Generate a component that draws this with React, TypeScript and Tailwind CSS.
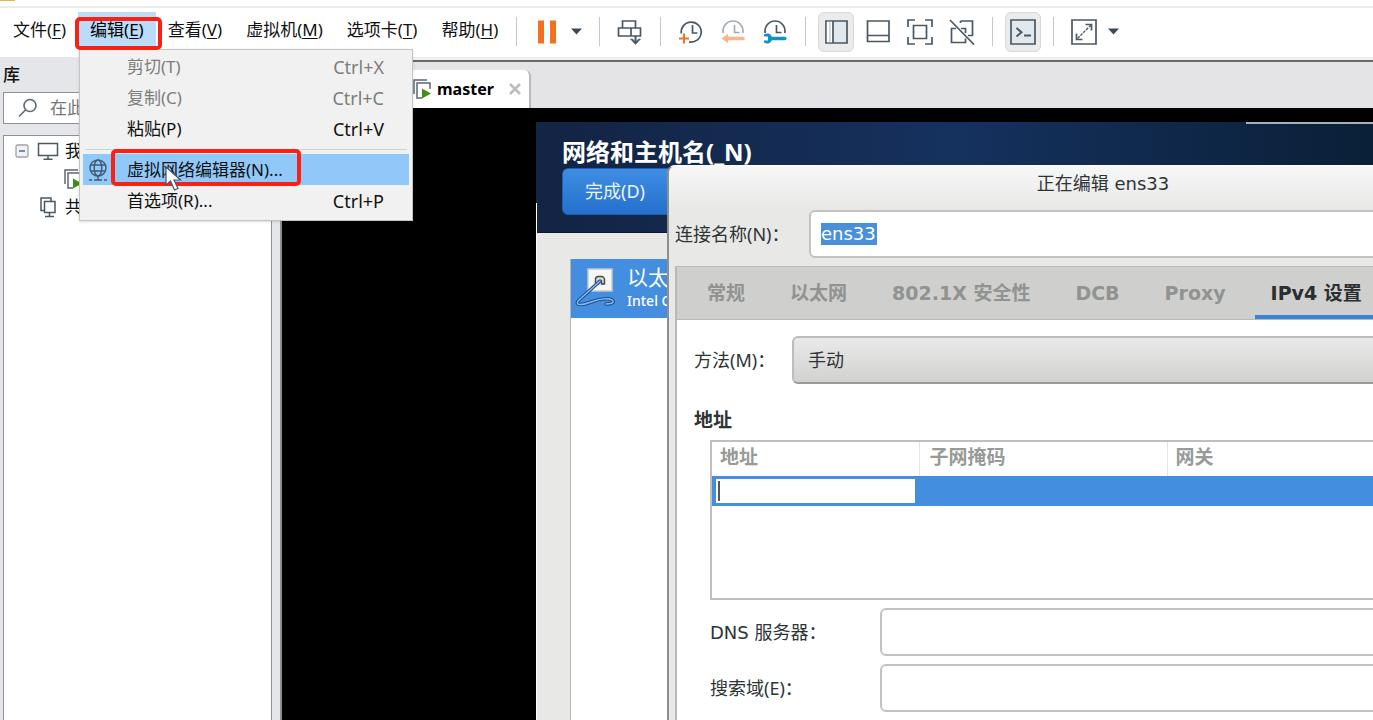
import type { ReactNode } from "react";

const menus = [
  { label: "文件", key: "F" },
  { label: "编辑", key: "E", open: true },
  { label: "查看", key: "V" },
  { label: "虚拟机", key: "M" },
  { label: "选项卡", key: "T" },
  { label: "帮助", key: "H" },
];

function Separator() {
  return <span className="mx-3 h-[29px] w-px shrink-0 bg-[#c6c6c8]" />;
}

function ToolButton({ label, active, children }: { label: string; active?: boolean; children: ReactNode }) {
  return (
    <button
      type="button"
      aria-label={label}
      className={
        active
          ? "flex h-10 w-9 shrink-0 items-center justify-center rounded-md border border-[#d8d8d8] bg-[#ebebec]"
          : "flex h-10 w-9 shrink-0 items-center justify-center"
      }
    >
      {children}
    </button>
  );
}

function Icon({ children, size = 26 }: { children: ReactNode; size?: number }) {
  return (
    <svg width={size} height={size} viewBox="0 0 26 26" fill="none" stroke="#4a5863" strokeWidth="1.7" className="shrink-0">
      {children}
    </svg>
  );
}

function Caret({ label }: { label: string }) {
  return (
    <button type="button" aria-label={label} className="flex h-10 w-[22px] shrink-0 items-center justify-center">
      <svg width="11" height="7" viewBox="0 0 11 7">
        <path d="M0 0.5h11L5.500 6.500z" fill="#3c4a56" />
      </svg>
    </button>
  );
}

function VmIcon() {
  return (
    <svg width="20" height="22" viewBox="0 0 20 22" fill="none" className="shrink-0">
      <path d="M2 16V2h13" stroke="#5b6670" strokeWidth="1.500" />
      <path d="M10 20H5V5h13v6" stroke="#5b6670" strokeWidth="1.500" />
      <path d="M10 10.500l9 5-9 5z" fill="#3f9014" />
    </svg>
  );
}

function Toolbar() {
  return (
    <header className="flex h-[51px] shrink-0 items-center border-t-2 border-[#ececec] bg-white pb-0.5 pl-px">
      <nav className="flex self-start pt-1">
        {menus.map((m) => (
          <button
            key={m.key}
            type="button"
            className={
              m.open
                ? "h-9 shrink-0 whitespace-nowrap bg-[#b9dcf9] px-3 text-[17px] leading-6 text-black"
                : "h-9 shrink-0 whitespace-nowrap px-3 text-[17px] leading-6 text-[#111]"
            }
          >
            {m.label}(<u className="underline-offset-2">{m.key}</u>)
          </button>
        ))}
      </nav>
      <span className="ml-1.5 mr-3 h-[29px] w-px shrink-0 bg-[#c6c6c8]" />
      <ToolButton label="挂起">
        <Icon>
          <path d="M4 1.500h6v23H4zM16 1.500h6v23h-6z" fill="#f4701f" stroke="none" />
        </Icon>
      </ToolButton>
      <Caret label="电源选项" />
      <Separator />
      <ToolButton label="发送">
        <Icon>
          <path d="M5.500 9V2h13v7M1.500 9h22v8h-22zM14 9v8" />
          <path d="M18.500 17v6" strokeWidth="2" />
          <path d="M13.500 20h2l3 3 3-3h2l-5 5.500z" fill="#4a5863" stroke="#4a5863" strokeWidth="0.600" />
        </Icon>
      </ToolButton>
      <Separator />
      <div className="flex gap-1.5">
        <ToolButton label="拍摄快照">
          <Icon>
            <path d="M3.300 14.500A10 10 0 1 1 11 22.800M14.500 6v8h5" />
            <path d="M6 14.500v10M1 19.500h10" stroke="#f4701f" strokeWidth="2" />
          </Icon>
        </ToolButton>
        <ToolButton label="恢复快照">
          <Icon>
            <path d="M3.200 14A10 10 0 1 1 22.800 14M14.500 6v7.500h5" stroke="#a4abb2" />
            <path d="M1.500 19.500l6.500-4.800v3h16.500v3.600H8v3z" fill="#fdb48b" stroke="none" />
          </Icon>
        </ToolButton>
        <ToolButton label="管理快照">
          <Icon>
            <path d="M3.200 14A10 10 0 1 1 22.800 14M14.500 6v7.500h5" />
            <path
              d="M2 15.500a5 5 0 0 1 7.800 2.200h13a1.800 1.800 0 0 1 0 3.600h-13A5 5 0 0 1 2 23.500v-2h4v-4H2z"
              fill="#0e94c4"
              stroke="none"
            />
          </Icon>
        </ToolButton>
      </div>
      <Separator />
      <div className="flex gap-1.5">
        <ToolButton label="显示库" active>
          <Icon>
            <path d="M3 2h21v22H3z" fill="#e1e8ee" />
            <path d="M3.800 2.800h5.500v20.400H3.800z" fill="#fff" stroke="none" />
            <path d="M10 2v22" />
            <path d="M7 3v20" stroke="#a9b3bb" strokeWidth="1" />
          </Icon>
        </ToolButton>
        <ToolButton label="缩略图栏">
          <Icon>
            <path d="M2.500 2h21.500v20.500H2.500zM2.500 16.500H24" />
          </Icon>
        </ToolButton>
        <ToolButton label="全屏">
          <Icon>
            <path d="M1 8V1h7M18 1h7v7M25 18v7h-7M8 25H1v-7M6.500 6.500h13v13h-13z" />
          </Icon>
        </ToolButton>
        <ToolButton label="Unity 模式">
          <Icon>
            <path d="M11.500 2H23.500v14.500h-4.500M7 9.500H2.500v14H16.500v-4M12 9.500h4.500V14M11.500 2v2" />
            <path d="M1 1l24 24.500" />
          </Icon>
        </ToolButton>
      </div>
      <Separator />
      <ToolButton label="控制台视图" active>
        <Icon>
          <path d="M1 1h24v24H1z" fill="#e1e8ee" />
          <path d="M6.500 9l5 4.300-5 4.300M14 16.500h7" strokeWidth="2" />
        </Icon>
      </ToolButton>
      <Separator />
      <ToolButton label="拉伸客户机">
        <Icon>
          <path d="M1 1h24v24H1z" />
          <path d="M14.500 5.500h6v6M5.500 14.500v6h6" />
          <path d="M20 6L6 20" strokeWidth="1.300" strokeDasharray="3 1" />
        </Icon>
      </ToolButton>
      <Caret label="拉伸选项" />
    </header>
  );
}

function Library() {
  return (
    <aside className="flex w-[282px] shrink-0 flex-col border-r-2 border-[#8f9194] bg-[#e4e6e9] pl-[3px] pr-2">
      <h2 className="h-[35px] pt-[6px] text-[17px] leading-6 font-medium text-[#111]">库</h2>
      <label className="flex h-8 shrink-0 items-center border border-[#8d9196] bg-white pl-3.5">
        <svg width="20" height="20" viewBox="0 0 20 20" fill="none" stroke="#5d6871" strokeWidth="1.600" className="shrink-0">
          <circle cx="12" cy="7.500" r="6" />
          <path d="M7.700 11.800L1 18.500" />
        </svg>
        <input
          type="text"
          aria-label="搜索"
          placeholder="在此"
          className="ml-3 w-full min-w-0 text-[17px] leading-6 outline-none placeholder:text-[#767676]"
        />
      </label>
      <ul className="mt-[11px] flex-1 border border-b-0 border-[#8d9196] bg-white pt-px text-[17px] leading-7 text-[#111]">
        <li className="flex items-center pl-[11px]">
          <svg width="14" height="14" viewBox="0 0 14 14" fill="none" className="shrink-0">
            <rect x="1" y="1" width="12" height="12" rx="1.500" fill="#f2f2f2" stroke="#a2a2a2" strokeWidth="1.300" />
            <path d="M4 7h6" stroke="#3560a8" strokeWidth="1.400" />
          </svg>
          <svg width="22" height="20" viewBox="0 0 22 20" fill="none" stroke="#4a5863" strokeWidth="1.500" className="ml-2 shrink-0">
            <path d="M1.500 2.500h19v12h-19zM11 14.500V18M6.500 18.200h9" />
          </svg>
          <span className="ml-1.5">我</span>
        </li>
        <li className="flex h-7 items-center pl-[59px]">
          <VmIcon />
        </li>
        <li className="flex items-center pl-[35px]">
          <svg width="20" height="22" viewBox="0 0 20 22" fill="none" stroke="#4a5863" strokeWidth="1.500" className="shrink-0">
            <path d="M5 14.500H2V2h10v3M5.500 5.500H16v11H5.500zM10.500 16.500V20M6 20.500h9" />
          </svg>
          <span className="ml-[6px]">共</span>
        </li>
      </ul>
    </aside>
  );
}

function MenuRow({ label, shortcut, disabled }: { label: string; shortcut?: string; disabled?: boolean }) {
  return (
    <button
      type="button"
      role="menuitem"
      disabled={disabled}
      className="flex h-[31px] w-full items-center pl-11 pr-[25px] text-[17px] leading-6 text-[#111] disabled:text-[#7d7d7d]"
    >
      <span>{label}</span>
      {shortcut && <span className="ml-auto text-[18px]">{shortcut}</span>}
    </button>
  );
}

function EditMenu() {
  return (
    <div
      role="menu"
      className="absolute left-[79px] top-[49px] z-20 w-[334px] border border-[#c4c4c4] bg-[#f1f1f1] px-[3px] pb-1 pt-px shadow-sm"
    >
      <MenuRow label="剪切(T)" shortcut="Ctrl+X" disabled />
      <MenuRow label="复制(C)" shortcut="Ctrl+C" disabled />
      <MenuRow label="粘贴(P)" shortcut="Ctrl+V" />
      <hr className="mx-0.5 mb-1 mt-[5px] border-[#d2d2d2]" />
      <button
        type="button"
        role="menuitem"
        className="flex h-[31px] w-full items-center bg-[#90c8fa] pl-1 text-[17px] leading-6 text-[#111]"
      >
        <svg width="22" height="24" viewBox="0 0 22 24" fill="none" stroke="#3f5a75" strokeWidth="1.400" className="shrink-0">
          <circle cx="11" cy="10" r="8" />
          <ellipse cx="11" cy="10" rx="3.800" ry="8" />
          <path d="M3.500 7h15M3.500 13h15M11 18v4M2 22h3M7 22h8M17 22h3" />
        </svg>
        <span className="ml-[18px]">虚拟网络编辑器(N)...</span>
      </button>
      <MenuRow label="首选项(R)..." shortcut="Ctrl+P" />
    </div>
  );
}

const tabs = ["常规", "以太网", "802.1X 安全性", "DCB", "Proxy"];

function ConnectionDialog() {
  return (
    <section
      aria-label="正在编辑 ens33"
      className="absolute left-[131px] top-[43px] flex h-[640px] w-[870px] flex-col rounded-tl-lg border-l-2 border-t border-[#8f908e] border-t-white bg-[#e8e8e7] pl-[6px] font-['DejaVu_Sans','Noto_Sans_CJK_SC',sans-serif] text-[18px] text-[#2e3436]"
    >
      <h2 className="-ml-[6px] h-11 shrink-0 rounded-tl-lg bg-gradient-to-b from-[#f7f7f7] to-[#e8e8e7] pt-1 text-center leading-7">
        正在编辑 ens33
      </h2>
      <div className="flex h-12 shrink-0 items-center">
        <label htmlFor="conn" className="w-[134px] shrink-0 font-['Noto_Sans','Noto_Sans_CJK_SC',sans-serif]">
          连接名称(N)：
        </label>
        <div className="flex h-12 flex-1 items-center rounded-l-md border-2 border-[#c2c2c0] bg-white pl-2.5">
          <input
            id="conn"
            type="text"
            defaultValue="ens33"
            size={4}
            className="h-[22px] w-[56px] bg-[#4a90d9] leading-[22px] text-white outline-none"
          />
        </div>
      </div>
      <div className="mt-2 flex flex-1 flex-col border-l-2 border-t border-[#b9b9b7] bg-white">
        <div
          role="tablist"
          className="flex h-[53px] shrink-0 gap-[13px] border-b border-[#b9b9b7] bg-[#cfcfcd] pl-[14px] text-[19px] font-bold text-[#919391]"
        >
          {tabs.map((t) => (
            <button key={t} type="button" role="tab" className="shrink-0 whitespace-nowrap px-4">
              {t}
            </button>
          ))}
          <button
            type="button"
            role="tab"
            aria-selected="true"
            className="shrink-0 whitespace-nowrap border-b-4 border-[#3584da] px-4 pt-1 text-[#2a2e30]"
          >
            IPv4 设置
          </button>
        </div>
        <div className="flex flex-col pl-[17px] pt-4">
          <div className="flex items-center">
            <label htmlFor="method" className="w-[98px] shrink-0 font-['Noto_Sans','Noto_Sans_CJK_SC',sans-serif]">
              方法(M)：
            </label>
            <select
              id="method"
              className="h-12 flex-1 appearance-none rounded-l-md border-2 border-[#bdbdbb] border-b-[#9b9b99] bg-gradient-to-b from-[#eaeaea] to-[#d1d1cf] pl-3.5"
            >
              <option>手动</option>
            </select>
          </div>
          <h3 className="mt-[22px] text-[19px] leading-7 font-bold">地址</h3>
          <div className="ml-4 mt-[6px] h-40 border-2 border-r-0 border-[#bfbfbd]">
            <table className="w-full table-fixed border-collapse text-left">
              <thead>
                <tr className="h-[34px] text-[19px] leading-7 text-[#989a98]">
                  <th className="w-[207px] border-r border-[#e4e4e4] pb-1 pl-2 pt-0">地址</th>
                  <th className="w-[248px] border-r border-[#e4e4e4] pb-1 pl-2.5 pt-0">子网掩码</th>
                  <th className="pb-1 pl-2 pt-0">网关</th>
                </tr>
              </thead>
              <tbody>
                <tr className="h-[30px] bg-[#438edf]">
                  <td className="p-0 pl-1">
                    <div className="mr-1 flex h-6 items-center bg-white pl-0.5">
                      <span className="h-5 w-0.5 shrink-0 bg-[#5b5451]" />
                      <input type="text" aria-label="地址" className="h-6 w-full min-w-0 outline-none" />
                    </div>
                  </td>
                  <td />
                  <td />
                </tr>
              </tbody>
            </table>
          </div>
          <div className="ml-4 mt-2 flex items-center">
            <label htmlFor="dns" className="w-[170px] shrink-0">
              DNS 服务器：
            </label>
            <input id="dns" type="text" className="h-12 min-w-0 flex-1 rounded-l-md border-2 border-[#c2c2c0] bg-white" />
          </div>
          <div className="ml-4 mt-2 flex items-center">
            <label htmlFor="search" className="w-[170px] shrink-0 font-['Noto_Sans','Noto_Sans_CJK_SC',sans-serif]">
              搜索域(E)：
            </label>
            <input id="search" type="text" className="h-12 min-w-0 flex-1 rounded-l-md border-2 border-[#c2c2c0] bg-white" />
          </div>
        </div>
      </div>
    </section>
  );
}

function GuestScreen() {
  return (
    <div className="relative flex flex-1 flex-col overflow-hidden bg-[#e8e8e7]">
      <div className="absolute right-0 top-0 h-0.5 w-[127px] bg-[#a9b1b8]" />
      <div className="absolute bottom-0 left-0 top-[81px] w-px bg-white" />
      <div className="h-[111px] shrink-0 border-b border-[#0a1a38] bg-gradient-to-r from-[#132444] via-[#15315e] to-[#0a2038] pl-[26px] pt-[14px]">
        <h1 className="text-[24px] leading-8 font-bold text-white">网络和主机名(_N)</h1>
        <button
          type="button"
          className="h-[47px] w-[136px] rounded-md border border-[#1c5fb0] bg-gradient-to-b from-[#3f8ee4] to-[#2470cd] pr-[30px] text-[18px] text-[#eef5fc]"
        >
          完成(D)
        </button>
      </div>
      <div className="ml-[34px] mt-[26px] flex-1 border-l border-[#b4b4b2] bg-white">
        <div className="flex h-[59px] items-center bg-[#438edf] text-white">
          <svg width="50" height="50" viewBox="0 0 50 50" fill="none" className="ml-1 shrink-0">
            <rect x="13" y="5" width="24" height="22" fill="#f6f6f4" stroke="#c9c9c5" strokeWidth="1.500" />
            <path d="M20.500 20v-4.500a3 3 0 0 1 3-3h3a3 3 0 0 1 3 3V20h-3v-3h-3v3z" fill="#ddd" stroke="#444" strokeWidth="1.400" />
            <path d="M25 17L3 37c-3 5 5 4 13 1s20-5 22-1c1 2-3 3-7 3" stroke="#1f4f91" strokeWidth="3.500" strokeLinecap="round" />
            <path d="M25 17L3 37c-3 5 5 4 13 1s20-5 22-1c1 2-3 3-7 3" stroke="#8db8ea" strokeWidth="1.400" strokeLinecap="round" />
          </svg>
          <div className="ml-0.5 whitespace-nowrap">
            <div className="text-[21px] leading-6">以太</div>
            <div className="text-[14px] leading-6 font-medium">Intel C</div>
          </div>
        </div>
      </div>
      <ConnectionDialog />
    </div>
  );
}

export default function App() {
  return (
    <div className="relative flex h-screen flex-col overflow-hidden bg-white font-['Noto_Sans','Noto_Sans_CJK_SC',sans-serif]">
      <div className="h-[6px] shrink-0 bg-white">
        <div className="h-px w-[15px] bg-[#f3b24a]" />
      </div>
      <Toolbar />
      <div className="flex min-h-0 flex-1">
        <Library />
        <main className="flex min-w-0 flex-1 flex-col bg-black">
          <div className="flex h-[51px] shrink-0 items-end border-t-[3px] border-[#f0f0f0] bg-[#e4e4e6]">
            <div className="flex h-12 flex-1 items-end border-t-2 border-[#69696d]">
              <div className="flex h-[38px] items-center rounded-tr-md border-r-2 border-[#b9b9bb] bg-white pl-[130px] pr-2">
                <VmIcon />
                <span className="ml-[5px] text-[16px] leading-6 font-bold text-black">master</span>
                <button type="button" aria-label="关闭" className="ml-[15px]">
                  <svg width="12" height="12" viewBox="0 0 12 12" stroke="#bdbdbd" strokeWidth="2.600">
                    <path d="M1 1l10 10M11 1L1 11" />
                  </svg>
                </button>
              </div>
            </div>
          </div>
          <div className="flex flex-1 pl-[254px] pt-[14px]">
            <GuestScreen />
          </div>
        </main>
      </div>
      <EditMenu />
      <div className="absolute left-[75px] top-[17px] z-30 h-[33px] w-[87px] rounded-[5px] border-4 border-[#fc2014]" />
      <div className="absolute left-[111px] top-[149px] z-30 h-[37px] w-[190px] rounded-[5px] border-4 border-[#fc2014]" />
      <svg width="18" height="27" viewBox="0 0 18 27" className="absolute left-[165px] top-[166px] z-40">
        <path d="M1 1v18l4.500-4 4 9 3.500-1.500-4-8.500h6.500z" fill="#fff" stroke="#44586c" strokeWidth="1.200" />
      </svg>
    </div>
  );
}
